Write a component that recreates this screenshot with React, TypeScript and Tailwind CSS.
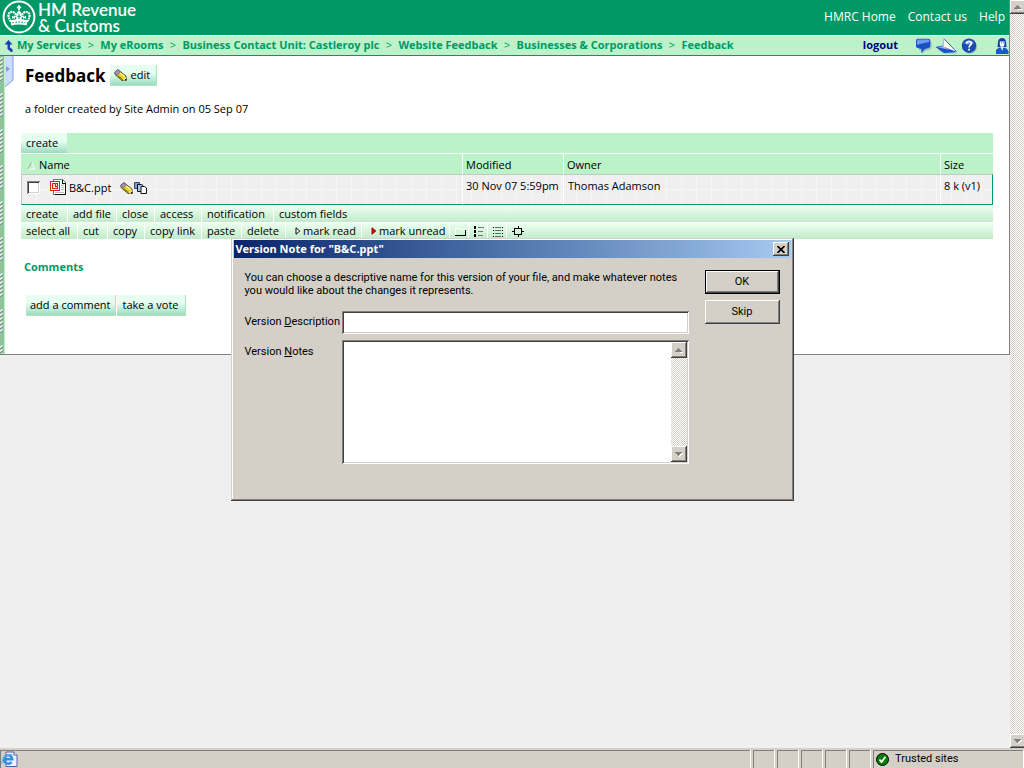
import { ReactNode } from "react";
import clsx from "clsx";

// Shared bevels for the classic window chrome
const raised =
  "bg-[#d4d0c8] shadow-[inset_-1px_-1px_0_#404040,inset_1px_1px_0_#ffffff,inset_-2px_-2px_0_#808080]";
const sunken =
  "bg-white shadow-[inset_1px_1px_0_#808080,inset_-1px_-1px_0_#ffffff,inset_2px_2px_0_#404040,inset_-2px_-2px_0_#d4d0c8]";
const checker = "bg-[repeating-conic-gradient(#ffffff_0_25%,#d4d0c8_0_50%)] bg-[length:2px_2px]";

const breadcrumbs = [
  "My Services",
  "My eRooms",
  "Business Contact Unit: Castleroy plc",
  "Website Feedback",
  "Businesses & Corporations",
  "Feedback",
];

const folderCommands = [
  { label: "create", width: "w-[47px]" },
  { label: "add file", width: "w-[49px]" },
  { label: "close", width: "w-[38px]" },
  { label: "access", width: "w-[47px]" },
  { label: "notification", width: "w-[72px]" },
  { label: "custom fields", width: "w-[76px]", last: true },
];

const PencilIcon = () => (
  <svg width="13" height="12" viewBox="0 0 13 12" aria-hidden="true">
    <path d="M1 3 4 0.7 12 7 12.3 11.3 8 11.5 1 5.5Z" fill="#e3d21d" stroke="#4d4a12" strokeWidth="0.9" />
    <path d="M0.7 3.2 3.7 0.7 6.5 2.8 3.3 6.2 1 5Z" fill="#a58bc0" stroke="#5d4d6b" strokeWidth="0.6" />
    <path d="M3.6 6.8 8.5 10.7" stroke="#8b7d00" strokeWidth="1.4" />
    <path d="M6 4 10.5 7.6" stroke="#fff48a" strokeWidth="1.4" />
    <path d="M9.5 9.2 12 8v3.3l-3 .2Z" fill="#e8d9b0" />
    <path d="M11 10h1.6v1.6H11z" fill="#222" />
  </svg>
);

const CopiesIcon = () => (
  <svg width="13" height="12" viewBox="0 0 13 12" aria-hidden="true">
    <path d="M.5.5h5v6h-5z" fill="#6f9be0" stroke="#445" />
    <path d="M3.5 2.5h4l1.500 1v6H3.500z" fill="#a9c4f2" stroke="#111" />
    <path d="M7 4.500h3.500l2 1.500v5.500H7z" fill="#fff" stroke="#111" />
  </svg>
);

const PptIcon = () => (
  <svg width="16" height="16" viewBox="0 0 16 16" shapeRendering="crispEdges" aria-hidden="true">
    <path d="M3.5.5h9l3 3v12h-12z" fill="#fff" stroke="#777" />
    <path d="M12 1v3h3M15.5 4v11.5H5" fill="none" stroke="#111" />
    <path d="M11 6h3M11 8h3M11 10h3M5 13h9" stroke="#bbb" />
    <path d="M.5 2.5h9v9h-9z" fill="#fff" stroke="#d22a12" />
    <path d="M2.5 4.5h5v5h-5z" fill="#fbe0c4" stroke="#d22a12" />
    <path d="M5 5v2h2" fill="none" stroke="#d22a12" />
  </svg>
);

const CrownLogo = () => (
  <svg width="34" height="34" viewBox="0 0 34 34" fill="none" aria-hidden="true">
    <circle cx="17" cy="17" r="15.4" stroke="#fff" strokeWidth="2" />
    <path d="M17 5.2v5M14.8 7.3h4.4" stroke="#fff" strokeWidth="1.8" />
    <path
      d="M9 21.5C3.5 14.5 8 10.6 11.6 12.2c2 .9 2.6 2.6 2.2 4.8M25 21.5c5.5-7 1-10.9-2.6-9.3-2 .9-2.6 2.6-2.2 4.8"
      stroke="#fff"
      strokeWidth="2.2"
      strokeDasharray="2 .6"
    />
    <path d="M17 10.5c-2.6 1.2-3.3 6-2.4 10.5h4.8c.9-4.5.2-9.3-2.4-10.5Z" fill="#fff" />
    <path d="M10 15.5l1.5 1.2 1.5-1.2v3.4l-1.5-1-1.5 1ZM21 15.5l1.5 1.2 1.5-1.2v3.4l-1.5-1-1.5 1Z" fill="#fff" />
    <path d="M17 14v5M15.4 16.4h3.2" stroke="#009966" strokeWidth="1" />
    <path d="M8.5 20.5c5-1.6 12-1.6 17 0l-.8 5c-5-1.3-10.4-1.3-15.4 0Z" fill="#fff" />
    <path d="M10.5 22.8c4.3-.9 8.7-.9 13 0" stroke="#009966" strokeDasharray="1.5 1.5" />
  </svg>
);

const BubbleIcon = () => (
  <svg width="17" height="16" viewBox="0 0 17 16" aria-hidden="true">
    <path d="M4 2.5h10.5l2 1.5v6l-2.5 2-3 .5-4.5 3.5.5-3.5-3-.5Z" fill="#7f9fc0" opacity="0.6" />
    <path d="M3 .8h10.5q1.8 0 1.8 1.8v5.2q0 2-2 2.2L10 11 6 15l.5-4L2.500 10Q1 9.500 1 8V2.800Q1 1 3 .8Z" fill="#1c4fc4" />
    <path d="M3.5 1.500h9.500c1.500 0 1.800 1.500 1 2.500C10 5.500 6 5 2 7V3Q2 1.700 3.500 1.500Z" fill="#6c9df0" />
  </svg>
);

const PlaneIcon = () => (
  <svg width="23" height="16" viewBox="0 0 23 16" aria-hidden="true">
    <path d="M3 12 10 11l13 4.500H9Z" fill="#7f9fc0" opacity="0.6" />
    <path d="M.5 9 8 7.500l14 6.500-13 1Z" fill="#1c4fc4" />
    <path d="M2.500 9.200 8 8.300 15 12Z" fill="#8fb4f2" />
    <path d="M9 .8 21.500 13.800 8 8.500Z" fill="#fff" />
    <path d="M9 .8 21.500 13.800" stroke="#2a5bc8" />
    <path d="M9 .8 8 8.500" stroke="#8fb4f2" />
  </svg>
);

const HelpIcon = () => (
  <svg width="17" height="16" viewBox="0 0 17 16" fill="none" aria-hidden="true">
    <circle cx="9.2" cy="8.7" r="7" fill="#7f9fc0" opacity="0.6" />
    <circle cx="8" cy="7.7" r="7.2" fill="#1c4aae" />
    <path d="M3 5a6 5 0 0 1 10 0c-3 2-7 2-10 0Z" fill="#6c9df0" />
    <path d="M5.7 5.600c.2-3 4.800-2.900 4.700-.2 0 1.700-2.300 1.900-2.300 4" stroke="#fff" strokeWidth="1.7" />
    <path d="M7.200 10.700h1.800v1.700H7.200z" fill="#fff" />
  </svg>
);

const PersonIcon = () => (
  <svg width="14" height="17" viewBox="0 0 14 17" aria-hidden="true">
    <path d="M3 5c0-5.500 8-5.500 8 0l.5 5h-9Z" fill="#123fae" />
    <path d="M4.800 4.200c1.500.8 3.300-.2 4.700 0v3.500c0 2.300-4.700 2.800-4.700 0Z" fill="#fff" />
    <path d="M6 5.800h.8M8 5.800h.8" stroke="#123fae" />
    <path d="M1 17v-4l3-2.500h2l1 1.500 1.500-1.500 3 1L13.500 14v3Z" fill="#1c56d0" />
    <path d="M5.500 9.500h3L7.200 14Z" fill="#eef4ff" />
  </svg>
);

const UpArrowIcon = () => (
  <svg width="10" height="12" viewBox="0 0 10 12" aria-hidden="true">
    <path d="M4.500 0 8.500 4.500H6v3l2.500 1.700V12H7L3.500 9V4.500H.5Z" fill="#1c3fb4" />
  </svg>
);

const ScrollArrow = ({ down }: { down?: boolean }) => (
  <svg width="8" height="5" viewBox="0 0 8 5" shapeRendering="crispEdges" aria-hidden="true">
    <path d={down ? "M1 1h7L4.500 5Z" : "M1 5h7V4Z"} fill="#fff" />
    <path d={down ? "M0 0h7L3.500 4Z" : "M0 4h7L3.500 0Z"} fill="#808080" />
  </svg>
);

// The page and the notes box have the same scrollbar
const Scrollbar = ({ className, button = "h-4" }: { className?: string; button?: string }) => (
  <div className={clsx("flex w-4 shrink-0 flex-col justify-between", checker, className)}>
    <button aria-label="Scroll up" className={clsx("flex items-center justify-center", button, raised)}>
      <ScrollArrow />
    </button>
    <button aria-label="Scroll down" className={clsx("flex items-center justify-center", button, raised)}>
      <ScrollArrow down />
    </button>
  </div>
);

const ToolbarItem = ({ width, last, children }: { width: string; last?: boolean; children: ReactNode }) => (
  <button
    className={clsx(
      "flex h-4 shrink-0 items-center gap-[2px] whitespace-nowrap pl-[5px] leading-4",
      !last && "border-r border-white",
      width
    )}
  >
    {children}
  </button>
);

const GreenButton = ({ children }: { children: ReactNode }) => (
  <button className="flex h-[21px] items-center gap-[3px] border-b border-r border-[#a9e6b8] bg-linear-to-b from-[#e6fff0] from-40% to-[#9bdcc0] px-1">
    {children}
  </button>
);

const Flag = ({ red }: { red?: boolean }) => (
  <svg width="6" height="8" viewBox="0 0 6 8" className="ml-1" aria-hidden="true">
    <path d="M1 .8 4.800 4 1 7.200Z" fill={red ? "#e00000" : "#fff"} stroke={red ? "#a00000" : "#000"} />
  </svg>
);

const Spiral = () => (
  <svg width="5" height="100%" className="absolute inset-y-0 left-0" aria-hidden="true">
    <defs>
      <pattern id="coil" width="4" height="4" patternUnits="userSpaceOnUse">
        <path d="M0 2.500 2.500 .5" stroke="#fff" strokeWidth="1.2" />
        <path d="M0 3.800 3 1.800" stroke="#7b8794" strokeWidth="1" />
      </pattern>
      <pattern id="binding" y="1" width="5" height="36" patternUnits="userSpaceOnUse">
        <rect width="3" height="24" fill="url(#coil)" />
      </pattern>
    </defs>
    <rect width="5" height="100%" fill="url(#binding)" />
  </svg>
);

const Header = () => (
  <header>
    <div className="flex h-[35px] justify-between bg-[#009966] text-white">
      <a href="#home" className="flex gap-[2px] pl-[2px] font-['Lato'] text-[17px] font-semibold leading-4">
        <CrownLogo />
        <span className="pt-[2px]">
          HM Revenue
          <br />& Customs
        </span>
      </a>
      <nav className="flex gap-3 pr-1 text-[12px] leading-[34px]">
        <a href="#hmrc">HMRC Home</a>
        <a href="#contact">Contact us</a>
        <a href="#help">Help</a>
      </nav>
    </div>
    <div className="flex h-[21px] items-center justify-between border-b border-t border-b-[#009966] border-t-white bg-[#bbf2c8] font-bold">
      <nav className="flex items-center whitespace-nowrap pl-1 text-[11px] text-[#009966]">
        <UpArrowIcon />
        {breadcrumbs.map((crumb, i) => (
          <span key={crumb} className="flex">
            {i > 0 && <span className="w-[19px] text-center font-normal">&gt;</span>}
            <a href="#crumb" className={clsx(i === 0 && "pl-[3px]")}>
              {crumb}
            </a>
          </span>
        ))}
      </nav>
      <div className="flex items-center">
        <a href="#logout" className="mr-[17px] text-[11px] text-[#000080]">
          logout
        </a>
        <div className="flex gap-[3px]">
          <BubbleIcon />
          <PlaneIcon />
          <HelpIcon />
        </div>
        <span className="ml-[17px]">
          <PersonIcon />
        </span>
      </div>
    </div>
  </header>
);

const FileTable = () => (
  <table className="mt-px w-full table-fixed border-separate border-spacing-0 text-left">
    <colgroup>
      <col />
      <col className="w-[101px]" />
      <col className="w-[377px]" />
      <col className="w-[53px]" />
    </colgroup>
    <thead className="bg-[#bbf2c8]">
      <tr className="h-5 leading-[18px]">
        <th className="p-0 pt-[2px] font-normal">
          <span className="flex items-center gap-[3px] pl-[6px]">
            <svg width="9" height="9" viewBox="0 0 9 9" aria-hidden="true">
              <path d="M4.500 1 1 8h7Z" fill="none" stroke="#fff" />
              <path d="M4.500 1 1 8" stroke="#9aa89d" />
            </svg>
            Name
          </span>
        </th>
        <th className="border-l border-white p-0 pl-[3px] pt-[2px] font-normal">Modified</th>
        <th className="border-l border-white p-0 pl-[3px] pt-[2px] font-normal">Owner</th>
        <th className="border-l border-white p-0 pl-[3px] pt-[2px] font-normal">Size</th>
      </tr>
    </thead>
    <tbody className="bg-[#efefef] bg-[linear-gradient(#f6f6f6_1px,transparent_1px),linear-gradient(90deg,#f6f6f6_1px,transparent_1px)] bg-[length:15px_15px]">
      <tr className="h-[31px] whitespace-nowrap">
        <td className="border-b border-l border-t border-b-[#009966] border-l-[#c6c6c6] border-t-[#c6c6c6] p-0 pb-[2px]">
          <div className="flex items-center pl-[5px]">
            <input
              type="checkbox"
              aria-label="Select B&C.ppt"
              className={clsx("mb-[2px] mr-[10px] size-[13px] appearance-none", sunken)}
            />
            <span className="mb-1">
              <PptIcon />
            </span>
            <a href="#file" className="ml-[3px] mr-[9px]">
              B&amp;C.ppt
            </a>
            <span className="mb-[2px] flex gap-px">
              <PencilIcon />
              <CopiesIcon />
            </span>
          </div>
        </td>
        <td className="border-b border-l border-t border-b-[#009966] border-l-white border-t-[#c6c6c6] p-0 pb-[7px] pl-[3px]">
          30 Nov 07 5:59pm
        </td>
        <td className="border-b border-l border-t border-b-[#009966] border-l-white border-t-[#c6c6c6] p-0 pb-[7px] pl-1">
          Thomas Adamson
        </td>
        <td className="border-b border-l border-r border-t border-b-[#009966] border-l-white border-r-[#009966] border-t-[#c6c6c6] p-0 pb-[7px] pl-[3px]">
          8 k (v1)
        </td>
      </tr>
    </tbody>
  </table>
);

const toolbar = "mt-px flex h-4 overflow-hidden bg-linear-to-b from-[#ecfff0] to-[#c2ebca]";

const FolderPage = () => (
  <main className="relative border-b border-[#808080] bg-white pb-[38px] pl-[21px] pr-4">
    <div className="absolute inset-y-0 left-0 w-[5px] border-r border-[#bbf2c8] bg-[#8fc49b]">
      <Spiral />
    </div>
    <button aria-label="Open panel" className="absolute left-[5px] top-0">
      <svg width="9" height="32" viewBox="0 0 9 32" aria-hidden="true">
        <path d="M0 0h8v24L0 31Z" fill="#ccdcfb" />
        <path d="M8 0v24L0 31" fill="none" stroke="#7f9fdc" />
        <path d="M1 10l4 3-4 3Z" fill="#7f9fdc" />
      </svg>
    </button>

    <div className="flex items-center gap-[5px] pl-1 pt-[9px]">
      <h1 className="text-[17px] font-bold leading-5">Feedback</h1>
      <GreenButton>
        <PencilIcon />
        <span className="pr-[2px]">edit</span>
      </GreenButton>
    </div>
    <p className="mt-[15px] pl-1 leading-4">a folder created by Site Admin on 05 Sep 07</p>

    <section className="mt-4">
      <div className="flex h-5 bg-[#bbf2c8]">
        <button className="w-[46px] bg-linear-to-b from-[#e6fff0] from-40% to-[#9bdcc0] pl-[5px] text-left">
          create
        </button>
      </div>
      <FileTable />
      <div className={toolbar}>
        {folderCommands.map((c) => (
          <ToolbarItem key={c.label} width={c.width} last={c.last}>
            {c.label}
          </ToolbarItem>
        ))}
      </div>
      <div className={toolbar}>
        <ToolbarItem width="w-[57px]">select all</ToolbarItem>
        <ToolbarItem width="w-[30px]">cut</ToolbarItem>
        <ToolbarItem width="w-[37px]">copy</ToolbarItem>
        <ToolbarItem width="w-[57px]">copy link</ToolbarItem>
        <ToolbarItem width="w-[40px]">paste</ToolbarItem>
        <ToolbarItem width="w-[44px]">delete</ToolbarItem>
        <ToolbarItem width="w-[76px]">
          <Flag />
          mark read
        </ToolbarItem>
        <ToolbarItem width="w-[88px]">
          <Flag red />
          mark unread
        </ToolbarItem>
        <ToolbarItem width="w-[19px]">
          <svg width="12" height="9" viewBox="0 0 12 9" shapeRendering="crispEdges" aria-label="Icon view">
            <path d="M.5 8V1.500h4l1 1h5" fill="none" stroke="#fff" />
            <path d="M0 8.500h11M10.500 3v6" stroke="#000" />
          </svg>
        </ToolbarItem>
        <ToolbarItem width="w-[19px]">
          <svg width="10" height="11" viewBox="0 0 10 11" shapeRendering="crispEdges" aria-label="List view">
            <path d="M0 1.500h2M0 5.500h2M0 9.500h2" stroke="#000" strokeWidth="3" />
            <path d="M4 1.500h6M4 5.500h5M4 9.500h5" stroke="#777" />
          </svg>
        </ToolbarItem>
        <ToolbarItem width="w-[19px]">
          <svg width="10" height="11" viewBox="0 0 10 11" shapeRendering="crispEdges" aria-label="Details view">
            <path d="M0 1.500h1M0 4.500h1M0 7.500h1M0 10.500h1M9 1.500h1M9 4.500h1M9 7.500h1M9 10.500h1" stroke="#000" />
            <path d="M2 1.500h6M2 4.500h6M2 7.500h6M2 10.500h6" stroke="#666" />
          </svg>
        </ToolbarItem>
        <ToolbarItem width="w-[24px]" last>
          <svg width="12" height="11" viewBox="0 0 12 11" shapeRendering="crispEdges" aria-label="Fit">
            <path d="M2.500 2.500h7v6h-7zM0 5.500h3M9 5.500h3M6 0v3M6 8v3" fill="none" stroke="#000" />
          </svg>
        </ToolbarItem>
      </div>
    </section>

    <section className="mt-5 pl-[3px]">
      <h2 className="font-bold leading-4 text-[#009966]">Comments</h2>
      <div className="mt-5 flex gap-px pl-[2px]">
        <GreenButton>add a comment</GreenButton>
        <GreenButton>
          <span className="px-[2px]">take a vote</span>
        </GreenButton>
      </div>
    </section>
  </main>
);

const VersionDialog = () => (
  <div className="pointer-events-none absolute inset-0 flex items-start justify-center pt-[238px] font-['Roboto',sans-serif] text-[11px]">
    <div
      role="dialog"
      aria-label="Version Note"
      className="pointer-events-auto w-[563px] bg-[#d4d0c8] p-[3px] pt-[2px] shadow-[inset_-1px_-1px_0_#404040,inset_1px_1px_0_#d4d0c8,inset_-2px_-2px_0_#808080,inset_2px_2px_0_#ffffff]"
    >
      <div className="flex h-[18px] items-center justify-between bg-linear-to-r from-[#0a246a] to-[#a6caf0] pl-[2px] pr-[2px] font-['Noto_Sans',sans-serif] font-bold text-white">
        Version Note for "B&amp;C.ppt"
        <button aria-label="Close" className={clsx("flex h-[14px] w-4 items-center justify-center", raised)}>
          <svg width="8" height="7" viewBox="0 0 8 7" aria-hidden="true">
            <path d="M.5 0 7.500 7M7.500 0 .5 7" stroke="#000" strokeWidth="1.7" />
          </svg>
        </button>
      </div>
      <form className="flex justify-between px-[11px] pb-[34px] pt-3">
        <div className="w-[444px]">
          <p className="whitespace-nowrap pt-px leading-[13px]">
            You can choose a descriptive name for this version of your file, and make whatever notes
            <br />
            you would like about the changes it represents.
          </p>
          <div className="mt-[14px] flex items-center">
            <label htmlFor="description" className="w-[97px] whitespace-nowrap">
              Version <u>D</u>escription
            </label>
            <input id="description" className={clsx("h-[23px] flex-1 px-1 outline-none", sunken)} />
          </div>
          <div className="mt-[6px] flex">
            <label htmlFor="notes" className="w-[97px] pt-1 leading-4">
              Version <u>N</u>otes
            </label>
            <div className={clsx("flex h-[124px] flex-1 p-[2px]", sunken)}>
              <textarea id="notes" className="min-w-0 flex-1 resize-none px-1 outline-none" />
              <Scrollbar />
            </div>
          </div>
        </div>
        <div className="flex w-[75px] flex-col gap-[6px]">
          <button
            className={clsx(
              "h-6 border border-black bg-[#d4d0c8]",
              "shadow-[inset_-1px_-1px_0_#404040,inset_1px_1px_0_#ffffff,inset_-2px_-2px_0_#808080]"
            )}
          >
            OK
          </button>
          <button className={clsx("h-6", raised)}>Skip</button>
        </div>
      </form>
    </div>
  </div>
);

const statusCell = "border-l border-t border-[#808080] shadow-[1px_0_0_#ffffff]";

const StatusBar = () => (
  <footer className="flex h-5 shrink-0 gap-[3px] bg-[#d4d0c8] pt-[2px] font-['Roboto',sans-serif]">
    <div className={clsx("flex-1", statusCell)}>
      <svg width="17" height="16" viewBox="0 0 17 16" aria-hidden="true">
        <path d="M5 1h8l3 3v11.500H5Z" fill="#eef3ff" stroke="#5a5fa8" />
        <path d="M13 1v3h3" fill="#fff" stroke="#5a5fa8" />
        <path d="M10.500 11A4.200 4.200 0 1 1 11.300 8.300H3.600" fill="none" stroke="#2a8fdc" strokeWidth="2.4" />
        <path d="M1 13C-.5 8 7 2 12 4" fill="none" stroke="#5fb4ee" strokeWidth="1.2" />
      </svg>
    </div>
    {[1, 2, 3, 4, 5].map((n) => (
      <div key={n} className={clsx("w-[21px]", statusCell)} />
    ))}
    <div className={clsx("mr-px flex w-[150px] items-center gap-[6px] pl-[2px] text-[11px]", statusCell)}>
      <svg width="13" height="13" viewBox="0 0 13 13" aria-hidden="true">
        <circle cx="6.5" cy="6.5" r="6" fill="#008000" stroke="#000" />
        <path d="M3.500 6.500 5.500 9 9.500 3.800" fill="none" stroke="#fff" strokeWidth="1.8" />
      </svg>
      Trusted sites
    </div>
  </footer>
);

export default function App() {
  return (
    <div className="relative flex h-screen flex-col overflow-hidden bg-[#efefef] font-['Open_Sans',sans-serif] text-[11px] text-black">
      <div className="flex min-h-0 flex-1">
        <div className="min-w-0 flex-1">
          <div className="border-r border-[#808080]">
            <Header />
            <FolderPage />
          </div>
        </div>
        <Scrollbar className="-mr-[2px]" button="h-[14px]" />
      </div>
      <StatusBar />
      <VersionDialog />
    </div>
  );
}
